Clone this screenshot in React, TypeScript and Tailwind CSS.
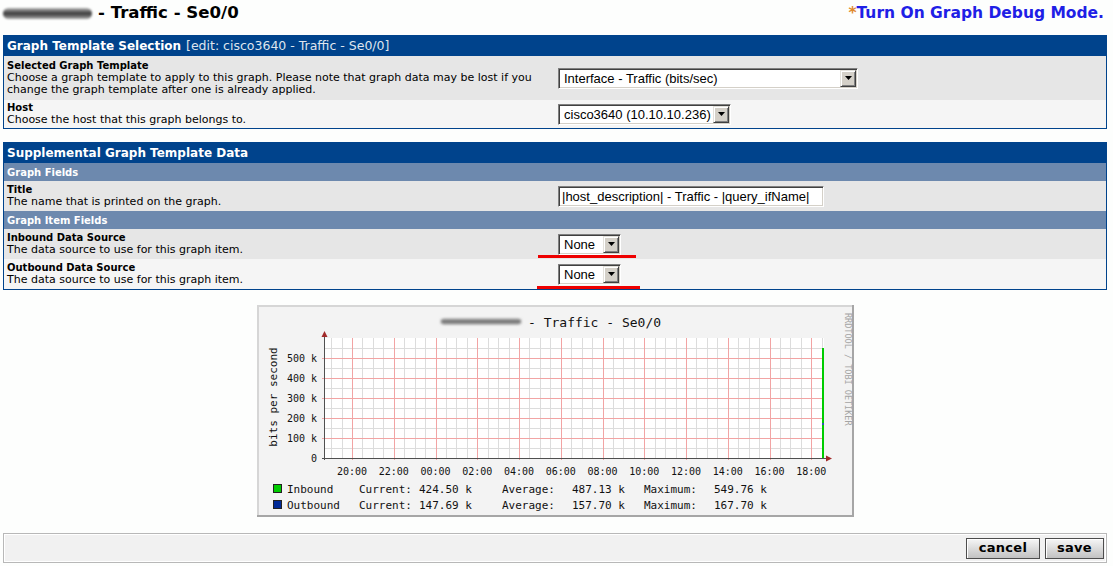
import type { ReactNode } from 'react';

const sans = "font-['DejaVu_Sans',Verdana,sans-serif]";
const winFont = "font-['Liberation_Sans',Arial,sans-serif]";
const mono = "'DejaVu Sans Mono', monospace";

const hours = ['20:00', '22:00', '00:00', '02:00', '04:00', '06:00', '08:00', '10:00', '12:00', '14:00', '16:00', '18:00'];

const legend = [
  { name: 'Inbound', color: '#00cc00', cur: '424.50 k', avg: '487.13 k', max: '549.76 k', y: 493 },
  { name: 'Outbound', color: '#002a97', cur: '147.69 k', avg: '157.70 k', max: '167.70 k', y: 509 },
];

function DropButton() {
  return (
    <div className="flex h-[17px] w-[16px] items-center justify-center border border-t-[#e4e2dc] border-l-[#e4e2dc] border-r-[#404040] border-b-[#404040] bg-[#d4d0c8] shadow-[inset_1px_1px_0_#fff,inset_-1px_-1px_0_#808080]">
      <svg width="7" height="4" viewBox="0 0 7 4">
        <path d="M0 0h7L3.5 4z" fill="#000" />
      </svg>
    </div>
  );
}

function Select({ value, className }: { value: string; className: string }) {
  return (
    <div
      className={`flex h-[21px] items-center justify-between border border-t-[#808080] border-l-[#808080] border-r-white border-b-white bg-white pr-[1px] shadow-[inset_1px_1px_0_#404040,inset_-1px_-1px_0_#d4d0c8] ${className}`}
    >
      <span className={`${winFont} pl-[5px] text-[13px] leading-none text-black`}>{value}</span>
      <DropButton />
    </div>
  );
}

function TextInput({ value }: { value: string }) {
  return (
    <div className="flex h-[21px] w-[266px] items-center border border-t-[#808080] border-l-[#808080] border-r-white border-b-white bg-white shadow-[inset_1px_1px_0_#404040,inset_-1px_-1px_0_#d4d0c8]">
      <span className={`${winFont} pl-[3px] text-[13px] leading-none text-black`}>{value}</span>
    </div>
  );
}

function Row({
  label,
  desc,
  children,
  alt,
  height,
}: {
  label: string;
  desc: ReactNode;
  children: ReactNode;
  alt?: boolean;
  height: string;
}) {
  return (
    <div className={`grid grid-cols-2 ${height} ${alt ? 'bg-[#f5f5f5]' : 'bg-[#e6e6e6]'}`}>
      <div className="flex flex-col justify-center px-[3px]">
        <div className="text-[10px] font-bold leading-[12px] text-black">{label}</div>
        <div className="text-[11px] leading-[12px] text-black">{desc}</div>
      </div>
      <div className="flex items-center px-[3px]">{children}</div>
    </div>
  );
}

function Header({ children }: { children: ReactNode }) {
  return (
    <div className="flex h-[20px] items-center bg-[#00438c] px-[3px] whitespace-nowrap text-white">{children}</div>
  );
}

function SubHeader({ children }: { children: ReactNode }) {
  return (
    <div className="flex h-[18px] items-center bg-[#6d89ae] px-[3px] text-[10px] font-bold text-white">{children}</div>
  );
}

function Blob({ className }: { className: string }) {
  return (
    <div
      className={`rounded-full bg-gradient-to-b from-[#b8b8b8] via-[#3c3c3c] to-[#a8a8a8] blur-[1px] ${className}`}
    />
  );
}

function TrafficGraph() {
  const left = 324;
  const right = 824;
  const top = 338;
  const bottom = 458;
  const step = 41.75;
  const majorX = hours.map((_, i) => 352 + i * step);
  const minorX: number[] = [];
  for (let x = 352 - step / 2; x < right; x += step / 4) {
    if (x > left + 1) minorX.push(x);
  }
  const majorY = [1, 2, 3, 4, 5].map((k) => bottom - k * 20);
  const minorY = [0, 1, 2, 3, 4, 5].map((k) => bottom - 10 - k * 20);
  const px = (v: number) => Math.round(v) + 0.5;

  return (
    <svg width={597} height={212} viewBox="257 305 597 212" className="block">
      <defs>
        <filter id="smudge" x="-20%" y="-100%" width="140%" height="300%">
          <feGaussianBlur stdDeviation="1.6 1" />
        </filter>
        <linearGradient id="smudgeFill" x1="0" y1="0" x2="0" y2="1">
          <stop offset="0" stopColor="#c8c8c8" />
          <stop offset="0.5" stopColor="#6a6a6a" />
          <stop offset="1" stopColor="#c0c0c0" />
        </linearGradient>
      </defs>
      <rect x={257} y={305} width={597} height={212} fill="#f3f3f3" />
      <path d="M258 516V306H853" stroke="#d6d6d6" strokeWidth="2" fill="none" />
      <path d="M256 516H853V305" stroke="#a6a6a6" strokeWidth="2" fill="none" />

      <rect x={441} y={318} width={80} height={7} rx={3} fill="url(#smudgeFill)" filter="url(#smudge)" />
      <text x={528} y={327} fontFamily={mono} fontSize={13} fill="#111">
        - Traffic - Se0/0
      </text>

      <text
        x={845}
        y={313}
        transform="rotate(90 845 313)"
        fontFamily={mono}
        fontSize={8.5}
        fill="#a4a4a4"
      >
        RRDTOOL / TOBI OETIKER
      </text>

      <text
        x={277}
        y={397}
        transform="rotate(-90 277 397)"
        textAnchor="middle"
        fontFamily={mono}
        fontSize={11}
        fill="#111"
      >
        bits per second
      </text>

      <rect x={left} y={top} width={right - left} height={bottom - top} fill="#fff" />

      <g shapeRendering="crispEdges" strokeWidth={1}>
        {minorX.map((x) => (
          <line key={`mx${x}`} x1={px(x)} y1={top} x2={px(x)} y2={bottom} stroke="#dcdcdc" />
        ))}
        {minorY.map((y) => (
          <line key={`my${y}`} x1={left} y1={y + 0.5} x2={right} y2={y + 0.5} stroke="#dcdcdc" />
        ))}
        {majorX.map((x) => (
          <line key={`Mx${x}`} x1={px(x)} y1={top} x2={px(x)} y2={bottom + 2} stroke="#f2a4a4" />
        ))}
        {majorY.map((y) => (
          <line key={`My${y}`} x1={left - 2} y1={y + 0.5} x2={right} y2={y + 0.5} stroke="#f2a4a4" />
        ))}
        <line x1={left + 0.5} y1={top - 4} x2={left + 0.5} y2={bottom + 2} stroke="#505050" />
        <line x1={left - 2} y1={bottom + 0.5} x2={right + 4} y2={bottom + 0.5} stroke="#505050" />
      </g>

      <path d={`M${left + 0.5} 331L${left + 3.5} 337H${left - 2.5}z`} fill="#a12a2a" />
      <path d={`M832 ${bottom + 0.5}L826 ${bottom - 2.5}V${bottom + 3.5}z`} fill="#a12a2a" />

      <line x1={823} y1={348} x2={823} y2={bottom} stroke="#00cc00" strokeWidth={2} />
      <rect x={822} y={423} width={2} height={2} fill="#2a5ab0" />

      {[0, 100, 200, 300, 400, 500].map((v, i) => (
        <text
          key={v}
          x={317}
          y={bottom - i * 20 + 4}
          textAnchor="end"
          fontFamily={mono}
          fontSize={10}
          fill="#111"
        >
          {v === 0 ? '0' : `${v} k`}
        </text>
      ))}

      {hours.map((h, i) => (
        <text
          key={h}
          x={majorX[i]}
          y={475}
          textAnchor="middle"
          fontFamily={mono}
          fontSize={10}
          fill="#111"
        >
          {h}
        </text>
      ))}

      {legend.map((l) => (
        <g key={l.name} fontFamily={mono} fontSize={11} fill="#111">
          <rect x={273.5} y={l.y - 8.5} width={8} height={8} fill={l.color} stroke="#222" />
          <text x={287} y={l.y}>{l.name}</text>
          <text x={359} y={l.y}>Current:</text>
          <text x={419} y={l.y}>{l.cur}</text>
          <text x={502} y={l.y}>Average:</text>
          <text x={572} y={l.y}>{l.avg}</text>
          <text x={644} y={l.y}>Maximum:</text>
          <text x={714} y={l.y}>{l.max}</text>
        </g>
      ))}
    </svg>
  );
}

function Button({ children, className }: { children: ReactNode; className: string }) {
  return (
    <div
      className={`flex h-[21px] items-center justify-center border border-[#4d4d4d] bg-gradient-to-b from-[#f6f6f6] to-[#c2c2c2] text-[13px] font-bold tracking-[0.3px] text-black shadow-[inset_1px_1px_0_#fff] ${className}`}
    >
      {children}
    </div>
  );
}

export default function App() {
  return (
    <div className={`${sans} min-h-[566px] w-[1113px] bg-[#fdfefd] text-black`}>
      <div className="flex h-[35px] items-start justify-between pt-[3px] pr-[9px] pl-[3px]">
        <div className="flex items-center gap-[6px]">
          <Blob className="mt-[1px] h-[11px] w-[89px]" />
          <span className="text-[16.6px] font-bold leading-[20px]">- Traffic - Se0/0</span>
        </div>
        <div className="text-[15.5px] font-bold leading-[20px]">
          <span className="text-[#e0892c]">*</span>
          <span className="text-[#1f1fe6]">Turn On Graph Debug Mode.</span>
        </div>
      </div>

      <div className="ml-[3px] w-[1104px]">
        <div className="border border-[#00438c]">
          <Header>
            <span className="text-[12px] font-bold">Graph Template Selection</span>
            <span className="ml-[5px] text-[12.5px] text-[#dfe5ee]">[edit: cisco3640 - Traffic - Se0/0]</span>
          </Header>
          <Row
            label="Selected Graph Template"
            height="h-[44px]"
            desc={
              <>
                Choose a graph template to apply to this graph. Please note that graph data may be lost if you
                <br />
                change the graph template after one is already applied.
              </>
            }
          >
            <Select value="Interface - Traffic (bits/sec)" className="w-[300px]" />
          </Row>
          <Row label="Host" height="h-[28px]" alt desc="Choose the host that this graph belongs to.">
            <Select value="cisco3640 (10.10.10.236)" className="w-[173px]" />
          </Row>
        </div>

        <div className="relative mt-[13px] border border-[#00438c]">
          <Header>
            <span className="text-[12px] font-bold">Supplemental Graph Template Data</span>
          </Header>
          <SubHeader>Graph Fields</SubHeader>
          <Row label="Title" height="h-[30px]" desc="The name that is printed on the graph.">
            <TextInput value="|host_description| - Traffic - |query_ifName|" />
          </Row>
          <SubHeader>Graph Item Fields</SubHeader>
          <Row label="Inbound Data Source" height="h-[30px]" desc="The data source to use for this graph item.">
            <Select value="None" className="w-[63px]" />
          </Row>
          <Row label="Outbound Data Source" height="h-[30px]" alt desc="The data source to use for this graph item.">
            <Select value="None" className="w-[63px]" />
          </Row>
          <div className="absolute top-[112px] left-[534px] h-[3px] w-[98px] bg-[#ee0000]" />
          <div className="absolute top-[143px] left-[533px] h-[3px] w-[103px] bg-[#ee0000]" />
        </div>

        <div className="mt-[15px] flex justify-center">
          <TrafficGraph />
        </div>

        <div className="mt-[16px] h-[30px] border border-[#b8b8b8] bg-white p-[1px]">
          <div className="flex h-full items-center justify-end gap-[5px] bg-[#f1f1f1] pr-[1px]">
            <Button className="w-[74px]">cancel</Button>
            <Button className="w-[59px]">save</Button>
          </div>
        </div>
      </div>
    </div>
  );
}
